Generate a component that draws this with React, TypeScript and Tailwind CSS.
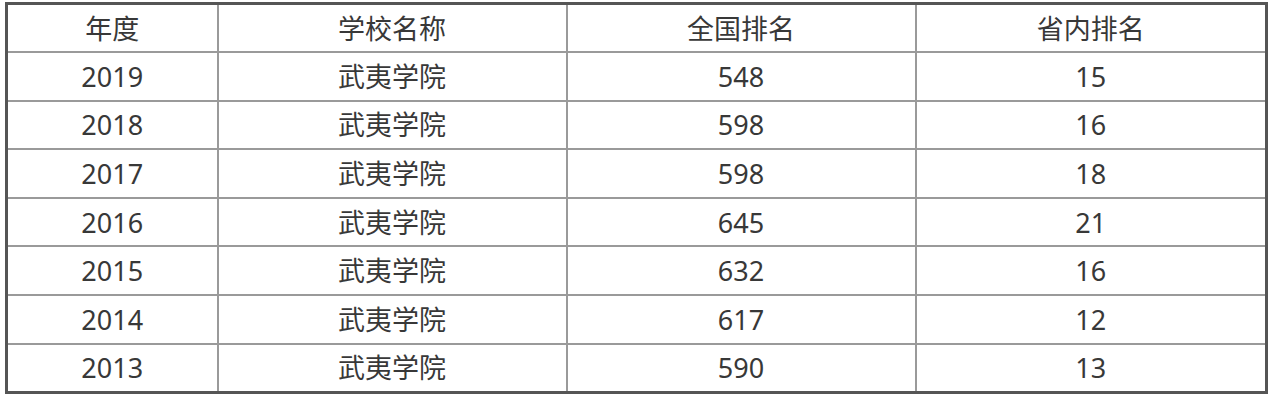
const rows = [
  ["2019", "武夷学院", "548", "15"],
  ["2018", "武夷学院", "598", "16"],
  ["2017", "武夷学院", "598", "18"],
  ["2016", "武夷学院", "645", "21"],
  ["2015", "武夷学院", "632", "16"],
  ["2014", "武夷学院", "617", "12"],
  ["2013", "武夷学院", "590", "13"],
];

const head = ["年度", "学校名称", "全国排名", "省内排名"];

const cell =
  "border-2 border-[#9a9a9a] text-center align-middle font-normal p-0 h-[48.6px]";

export default function App() {
  return (
    <div className="w-[1270px] h-[400px] bg-white pt-[2px] pl-[5px]">
      <table
        className="table-fixed border-collapse border-[3px] border-[#555] w-[1260px] text-[27px] leading-none text-[#383838]"
        style={{ fontFamily: '"Noto Sans", "Noto Sans CJK SC", sans-serif' }}
      >
        <colgroup>
          <col className="w-[211px]" />
          <col className="w-[349px]" />
          <col className="w-[349px]" />
          <col className="w-[351px]" />
        </colgroup>
        <thead>
          <tr>
            {head.map((h) => (
              <th key={h} className={cell}>
                {h}
              </th>
            ))}
          </tr>
        </thead>
        <tbody>
          {rows.map((r) => (
            <tr key={r[0]}>
              {r.map((v, i) => (
                <td key={i} className={cell}>
                  {v}
                </td>
              ))}
            </tr>
          ))}
        </tbody>
      </table>
    </div>
  );
}
